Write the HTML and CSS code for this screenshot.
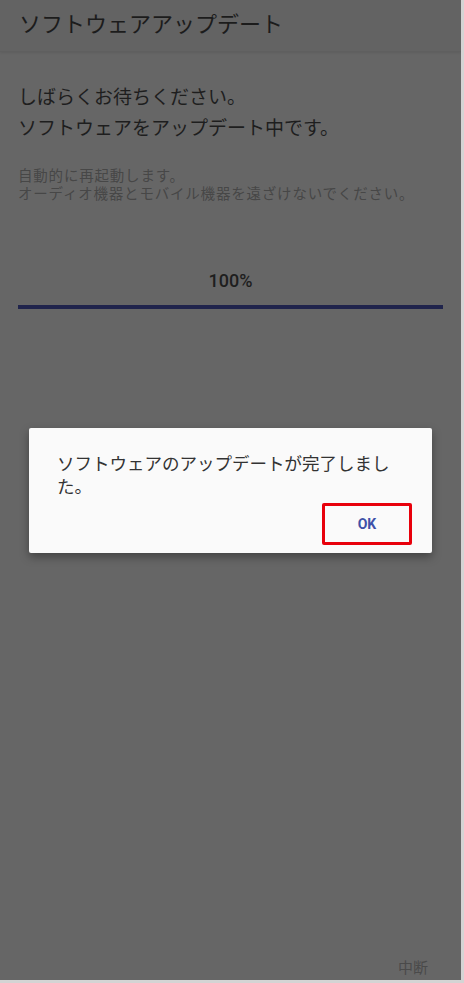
FILE: index.html
```html
<!DOCTYPE html>
<html lang="ja">
<head>
  <meta charset="UTF-8">
  <title>ソフトウェアアップデート</title>
  <link rel="stylesheet" href="styles.css">
</head>
<body>
  <div class="screen">
    <header class="app-bar">
      <h1>ソフトウェアアップデート</h1>
    </header>

    <main class="content">
      <p class="lead">しばらくお待ちください。<br>ソフトウェアをアップデート中です。</p>
      <p class="note">自動的に再起動します。<br>オーディオ機器とモバイル機器を遠ざけないでください。</p>

      <div class="progress">
        <div class="progress-label">100%</div>
        <div class="progress-track">
          <div class="progress-fill" style="width: 100%"></div>
        </div>
      </div>
    </main>

    <footer class="actions">
      <span class="cancel">中断</span>
    </footer>

    <div class="dialog">
      <p class="dialog-text">ソフトウェアのアップデートが完了しました。</p>
      <div class="dialog-buttons">
        <button class="ok">OK</button>
      </div>
    </div>
  </div>
</body>
</html>
```

FILE: styles.css
```css
html {
  background: #d4d4d4;
}

body {
  margin: 0;
  font-family: "Noto Sans CJK JP", "Noto Sans", sans-serif;
}

.screen {
  position: relative;
  width: 461px;
  height: 980px;
  background: #666666;
  display: flex;
  flex-direction: column;
  overflow: hidden;
}

.app-bar {
  height: 52px;
  background: #636363;
  border-bottom: 1px solid #5f5f5f;
  box-shadow: 0 1px 2px rgba(0, 0, 0, 0.08);
  padding: 7px 19px 0;
  box-sizing: border-box;
}

.app-bar h1 {
  margin: 0;
  font-size: 22px;
  line-height: 30px;
  font-weight: 400;
  color: #1c1c1c;
}

.content {
  flex: 1;
  padding: 0 18px;
}

.lead {
  margin: 28px 0 0;
  font-size: 19px;
  line-height: 31px;
  color: #1e1e1e;
}

.note {
  margin: 24px 0 0;
  font-size: 14.5px;
  line-height: 18px;
  letter-spacing: 0.8px;
  color: #474747;
}

.progress {
  margin-top: 68px;
}

.progress-label {
  font-family: Roboto, "Noto Sans", sans-serif;
  font-size: 18px;
  font-weight: 500;
  line-height: 22px;
  text-align: center;
  color: #1e1e1e;
}

.progress-track {
  margin-top: 13px;
  height: 4px;
  background: #4a4a4a;
}

.progress-fill {
  height: 100%;
  background: #20244c;
}

.actions {
  display: flex;
  justify-content: flex-end;
  padding: 0 33px 3px 0;
}

.cancel {
  font-size: 15px;
  line-height: 20px;
  color: #4a4a4a;
}

.dialog {
  position: absolute;
  top: 428px;
  left: 29px;
  width: 403px;
  height: 125px;
  box-sizing: border-box;
  background: #fafafa;
  border-radius: 2px;
  box-shadow: 0 4px 10px rgba(0, 0, 0, 0.35);
  padding: 23px 28px 0;
}

.dialog-text {
  margin: 0;
  font-size: 17.5px;
  line-height: 23px;
  color: #333333;
}

.dialog-buttons {
  display: flex;
  justify-content: flex-end;
  margin-top: 6px;
  margin-right: -8px;
}

.ok {
  width: 90px;
  height: 42px;
  border: 3px solid #e8000b;
  border-radius: 2px;
  background: transparent;
  font-family: Roboto, "Noto Sans", sans-serif;
  font-size: 14px;
  font-weight: 700;
  color: #3f51a8;
  padding: 0;
}
```
